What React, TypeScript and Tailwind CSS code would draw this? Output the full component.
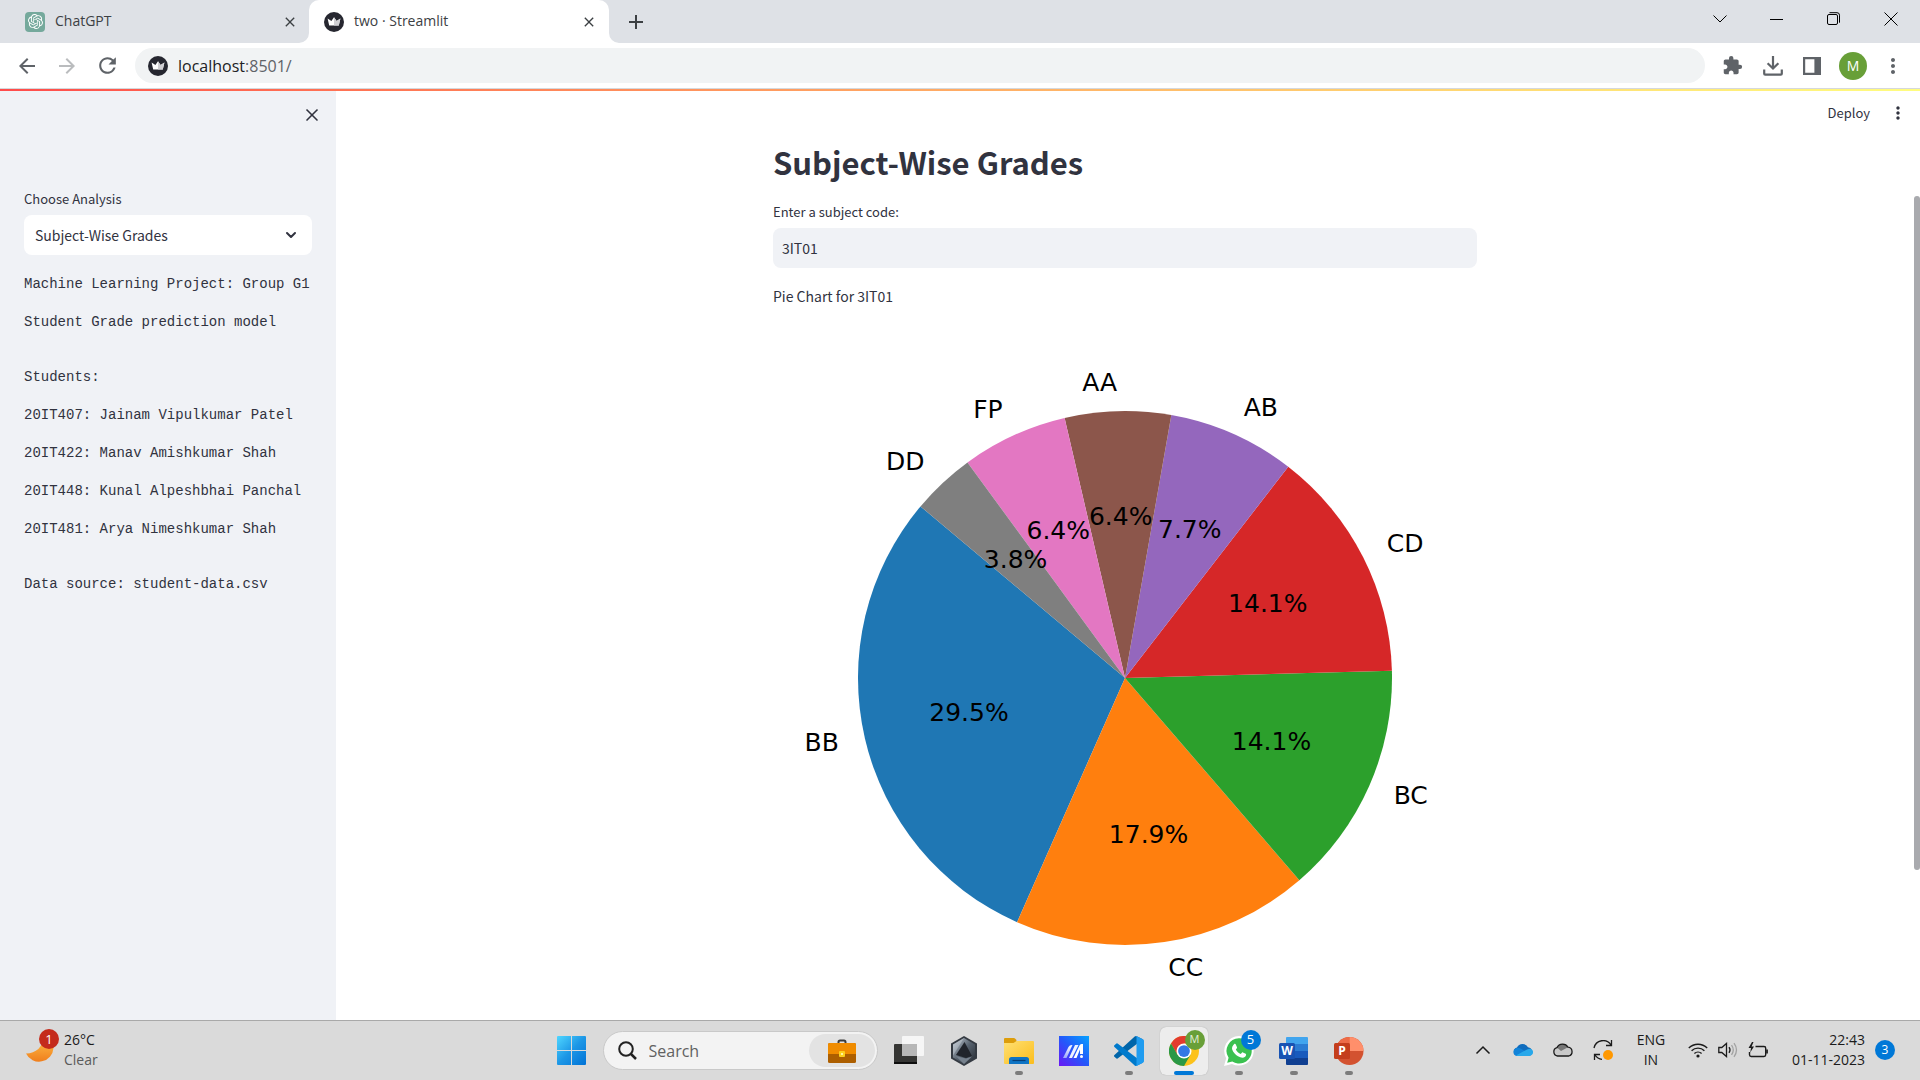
import React from 'react';
import { MdAdd, MdArrowBack, MdArrowForward, MdClose, MdExtension, MdMoreVert, MdRefresh } from 'react-icons/md';
import { SiOpenai } from 'react-icons/si';
import { ChevronDown, X } from 'lucide-react';

const UI = 'font-["Open_Sans","Noto_Sans",sans-serif]';
const SANS = 'font-["Noto_Sans_CJK_SC",sans-serif]';
const MONO = 'font-["Liberation_Mono",monospace]';

/* ---------- Browser chrome ---------- */

function CrownIcon() {
  return (
    <svg viewBox="0 0 20 20" className="size-5 shrink-0" aria-hidden="true">
      <circle cx="10" cy="10" r="10" fill="#262730" />
      <path d="M3.6 6.6 7.4 9 10 5.2 12.6 9l3.8-2.4-1.6 7H5.2z" fill="#fff" />
      <path d="M10 5.2 12.6 9l3.8-2.4-1.6 7H10z" fill="#d0d0d4" />
    </svg>
  );
}

function TabStrip() {
  return (
    <div className="flex h-[43px] bg-[#dee1e6] text-[#3c4043]">
      <div className="flex w-[309px] items-center pl-[25px] pr-[11px]">
        <span className="flex size-5 items-center justify-center rounded bg-[#75a99c] text-white">
          <SiOpenai size={15} />
        </span>
        <a href="#chatgpt" className="ml-[10px] flex-1 pb-0.5 text-[14px] leading-5">ChatGPT</a>
        <button aria-label="Close ChatGPT tab" className="flex size-4 items-center justify-center">
          <MdClose size={16} />
        </button>
      </div>
      <div className="relative flex w-[300px] items-center rounded-t-[10px] bg-white pl-[15px] pr-3">
        <svg viewBox="0 0 10 10" className="absolute -left-[10px] bottom-0 size-[10px]" aria-hidden="true">
          <path d="M10 0v10H0A10 10 0 0 0 10 0z" fill="#fff" />
        </svg>
        <svg viewBox="0 0 10 10" className="absolute -right-[10px] bottom-0 size-[10px]" aria-hidden="true">
          <path d="M0 0v10h10A10 10 0 0 1 0 0z" fill="#fff" />
        </svg>
        <CrownIcon />
        <a href="#streamlit" className="ml-[10px] flex-1 pb-0.5 text-[14px] leading-5">two · Streamlit</a>
        <button aria-label="Close Streamlit tab" className="flex size-4 items-center justify-center">
          <MdClose size={16} />
        </button>
      </div>
      <button aria-label="New tab" className="ml-4 flex w-[22px] items-center justify-center">
        <MdAdd size={24} className="shrink-0" />
      </button>
      <div className="ml-auto flex h-[37px] text-black">
        <button aria-label="Search tabs" className="flex w-[57px] items-center justify-center">
          <svg viewBox="0 0 14 14" className="size-[14px]" fill="none" stroke="#000" aria-hidden="true"><path d="M.5 3.500 7 10l6.500-6.500" /></svg>
        </button>
        <button aria-label="Minimize" className="flex w-[57px] items-center justify-center">
          <svg viewBox="0 0 14 14" className="size-[14px]" aria-hidden="true"><path d="M0 7.500h13" stroke="#000" /></svg>
        </button>
        <button aria-label="Restore" className="flex w-[57px] items-center justify-center">
          <svg viewBox="0 0 14 14" className="size-[14px]" fill="none" stroke="#000" aria-hidden="true">
            <rect x=".5" y="2.500" width="10" height="10" rx="1.500" />
            <path d="M2.500.7H10a2.500 2.500 0 0 1 2.500 2.500v7.500" />
          </svg>
        </button>
        <button aria-label="Close window" className="flex w-[58px] items-center justify-center">
          <svg viewBox="0 0 14 14" className="size-[14px]" stroke="#000" aria-hidden="true"><path d="M.5.5l13 13M13.500.5l-13 13" /></svg>
        </button>
      </div>
    </div>
  );
}

function Toolbar() {
  return (
    <div className="flex h-[46px] items-center border-b border-[#d5d8dc] bg-white px-[15px] text-[#5f6368]">
      <button aria-label="Back"><MdArrowBack size={24} /></button>
      <button aria-label="Forward" className="ml-4 text-[#babcbe]"><MdArrowForward size={24} /></button>
      <button aria-label="Reload" className="ml-4"><MdRefresh size={25} /></button>
      <div className="ml-[15px] flex h-[35px] flex-1 items-center rounded-full bg-[#f1f3f4] pl-[13px]">
        <CrownIcon />
        <a href="#url" className="ml-[10px] text-[16px] leading-6 text-[#202124]">
          localhost<span className="text-[#5f6368]">:8501/</span>
        </a>
      </div>
      <button aria-label="Extensions" className="ml-[17px]"><MdExtension size={21} /></button>
      <button aria-label="Downloads" className="ml-5">
        <svg viewBox="0 0 20 20" className="size-5" fill="none" stroke="currentColor" strokeWidth="2.200" aria-hidden="true">
          <path d="M10 0v12M4.600 7.200 10 12.500l5.400-5.300M1.200 13.500v4.200a1 1 0 0 0 1 1h15.600a1 1 0 0 0 1-1v-4.200" />
        </svg>
      </button>
      <button aria-label="Side panel" className="ml-5">
        <svg viewBox="0 0 18 18" className="size-[18px]" aria-hidden="true">
          <path d="M0 0h18v18H0zM2.200 2.200v13.600h9.200V2.200z" fill="currentColor" fillRule="evenodd" />
        </svg>
      </button>
      <button aria-label="Profile M" className="ml-[18px] flex size-7 items-center justify-center rounded-full bg-[#689f38] text-[14px] text-white">
        M
      </button>
      <button aria-label="Chrome menu" className="ml-[14px]"><MdMoreVert size={24} /></button>
    </div>
  );
}

/* ---------- Streamlit page ---------- */

function Sidebar() {
  return (
    <aside className="w-[336px] shrink-0 bg-[#f0f2f6] px-6 pt-[14px] text-[#31333f]">
      <div className="-mr-[10px] flex justify-end">
        <button aria-label="Close sidebar"><X size={20} strokeWidth={2} /></button>
      </div>
      <label htmlFor="analysis" className={`mt-[64px] block text-[13px] leading-5 ${SANS}`}>Choose Analysis</label>
      <div className="relative mt-[6px]">
        <select id="analysis" className={`h-10 w-full appearance-none rounded-lg bg-white pl-[11px] text-[14px] ${SANS}`}>
          <option>Subject-Wise Grades</option>
        </select>
        <ChevronDown size={16} strokeWidth={3} className="pointer-events-none absolute right-[13px] top-3" />
      </div>
      <div className={`mt-[18px] flex flex-col gap-[33px] whitespace-nowrap text-[14px] leading-[22px] ${MONO}`}>
        <div className="flex flex-col gap-4">
          <p>Machine Learning Project: Group G1</p>
          <p>Student Grade prediction model</p>
        </div>
        <div className="flex flex-col gap-4">
          <p>Students:</p>
          <p>20IT407: Jainam Vipulkumar Patel</p>
          <p>20IT422: Manav Amishkumar Shah</p>
          <p>20IT448: Kunal Alpeshbhai Panchal</p>
          <p>20IT481: Arya Nimeshkumar Shah</p>
        </div>
        <p>Data source: student-data.csv</p>
      </div>
    </aside>
  );
}

const GRADES = [
  { label: 'BB', count: 23, color: '#1f77b4' },
  { label: 'CC', count: 14, color: '#ff7f0e' },
  { label: 'BC', count: 11, color: '#2ca02c' },
  { label: 'CD', count: 11, color: '#d62728' },
  { label: 'AB', count: 6, color: '#9467bd' },
  { label: 'AA', count: 5, color: '#8c564b' },
  { label: 'FP', count: 5, color: '#e377c2' },
  { label: 'DD', count: 3, color: '#7f7f7f' },
];

function PieChart() {
  const cx = 352;
  const cy = 361;
  const r = 267;
  const total = GRADES.reduce((s, g) => s + g.count, 0);
  const at = (deg: number, dist: number) => {
    const a = (deg * Math.PI) / 180;
    return [cx + dist * Math.cos(a), cy - dist * Math.sin(a)];
  };
  let start = 140;
  const slices = GRADES.map((g) => {
    const sweep = (g.count / total) * 360;
    const slice = { ...g, start, end: start + sweep, mid: start + sweep / 2 };
    start += sweep;
    return slice;
  });
  return (
    <svg viewBox="0 0 704 680" className='w-full font-["DejaVu_Sans",sans-serif] text-[25px]' role="img" aria-label="Pie chart of grades">
      {slices.map((s) => {
        const [x1, y1] = at(s.start, r);
        const [x2, y2] = at(s.end, r);
        return <path key={s.label} d={`M${cx} ${cy}L${x1} ${y1}A${r} ${r} 0 0 0 ${x2} ${y2}Z`} fill={s.color} />;
      })}
      {slices.map((s) => {
        const [lx, ly] = at(s.mid, r * 1.1);
        const [px, py] = at(s.mid, r * 0.6);
        return (
          <g key={s.label}>
            <text x={lx} y={ly + 7} textAnchor={lx > cx ? 'start' : 'end'}>{s.label}</text>
            <text x={px} y={py + 7} textAnchor="middle">{((s.count / total) * 100).toFixed(1)}%</text>
          </g>
        );
      })}
    </svg>
  );
}

function Main() {
  return (
    <main className={`relative flex min-w-0 flex-1 overflow-hidden bg-white text-[#31333f] ${SANS}`}>
      <div className="min-w-0 flex-1">
        <div className="mx-auto w-full max-w-[704px] pt-[49px]">
          <h1 className="text-[31px] font-bold leading-[44px]">Subject-Wise Grades</h1>
          <label htmlFor="code" className="mt-[18px] block text-[13px] leading-5">Enter a subject code:</label>
          <input id="code" defaultValue="3IT01" className="mt-[6px] block h-10 w-full rounded-lg bg-[#f0f2f6] px-[9px] text-[14px]" />
          <p className="mt-4 text-[14px] leading-6">Pie Chart for 3IT01</p>
          <div className="mt-[9px]"><PieChart /></div>
        </div>
      </div>
      <div className="w-[6px] shrink-0 pt-[105px]">
        <div className="h-[674px] rounded-full bg-[#a9aaae]" />
      </div>
      <div className="absolute right-3 top-3 flex items-center gap-[18px]">
        <button className="text-[13px] leading-5">Deploy</button>
        <button aria-label="Main menu"><MdMoreVert size={20} /></button>
      </div>
    </main>
  );
}

/* ---------- Taskbar ---------- */

function TaskButton({ label, state, children }: { label: string; state?: 'open' | 'active'; children: React.ReactNode }) {
  return (
    <button
      aria-label={label}
      className={`relative flex size-12 items-center justify-center rounded-md ${state === 'active' ? 'bg-[#ededed] shadow-[0_0_1px_#999]' : ''}`}
    >
      {children}
      {state === 'open' && <span className="absolute bottom-0 left-5 h-1 w-2 rounded-full bg-[#7c7c7c]" />}
      {state === 'active' && <span className="absolute bottom-0 left-[14px] h-1 w-5 rounded-full bg-[#0078d7]" />}
    </button>
  );
}

function WindowsLogo() {
  return (
    <svg viewBox="0 0 29 29" className="size-[29px]" aria-hidden="true">
      <defs>
        <linearGradient id="win" x1="0" y1="0" x2="1" y2="1">
          <stop offset="0" stopColor="#4fd6ff" />
          <stop offset=".5" stopColor="#1d97e6" />
          <stop offset="1" stopColor="#0072d6" />
        </linearGradient>
      </defs>
      <path d="M1 0h13v14H0V1a1 1 0 0 1 1-1zM15 0h13a1 1 0 0 1 1 1v13H15zM0 15h14v14H1a1 1 0 0 1-1-1zM15 15h14v13a1 1 0 0 1-1 1H15z" fill="url(#win)" />
    </svg>
  );
}

function Briefcase() {
  return (
    <svg viewBox="0 0 28 24" className="h-6 w-7" aria-hidden="true">
      <path d="M10.500 5V3q0-1.500 1.500-1.500h4q1.500 0 1.500 1.500v2" fill="none" stroke="#3b3b3b" strokeWidth="2" />
      <rect y="4" width="28" height="20" rx="1.500" fill="#ad5f00" />
      <path d="M0 15V5.500Q0 4 1.500 4h25Q28 4 28 5.500V15z" fill="#f08c00" />
      <rect x="11" y="12" width="6" height="6" rx="1" fill="#fbd01e" />
      <rect x="13" y="14" width="2" height="2" fill="#fff3a0" />
    </svg>
  );
}

function TaskView() {
  return (
    <svg viewBox="0 0 30 29" className="h-[29px] w-[30px]" aria-hidden="true">
      <rect y="8" width="23" height="20" rx="1" fill="#353533" />
      <rect y="26" width="23" height="2" fill="#0e0e0e" />
      <rect x="8" width="22" height="20" rx="1" fill="#f6f6f6" />
      <path d="M8 8h15v12H8z" fill="#b7b7b7" />
    </svg>
  );
}

function ArmouryIcon() {
  return (
    <svg viewBox="0 0 28 30" className="h-[30px] w-7" aria-hidden="true">
      <defs>
        <linearGradient id="arm" x1="0" y1="0" x2="1" y2="1">
          <stop offset="0" stopColor="#c3ccd6" />
          <stop offset=".5" stopColor="#56616d" />
          <stop offset="1" stopColor="#252a31" />
        </linearGradient>
      </defs>
      <path d="M14 0 27 7.500v15L14 30 1 22.500v-15z" fill="#343a42" />
      <path d="M14 2 25 8.500v13L14 28 3 21.500v-13z" fill="url(#arm)" />
      <path d="M14.500 6 22 20l-6 2-10-3z" fill="#20242b" />
      <path d="M14 2 3 8.500v11z" fill="#d3dae2" fillOpacity=".4" />
      <path d="M5.500 20 16 22.500l6-2L14 28z" fill="#76818d" />
    </svg>
  );
}

function FolderIcon() {
  return (
    <svg viewBox="0 0 30 28" className="h-7 w-[30px]" aria-hidden="true">
      <defs>
        <linearGradient id="fold" x1="0" y1="0" x2="1" y2="1">
          <stop offset="0" stopColor="#ffe073" />
          <stop offset="1" stopColor="#fbbd1c" />
        </linearGradient>
      </defs>
      <path d="M0 10V2q0-1 1-1h9q1 0 2 1.500L13 5v5z" fill="#dd9d0b" />
      <path d="M0 6h9.500l3-2H29q1 0 1 1v21q0 1-1 1H1q-1 0-1-1z" fill="url(#fold)" />
      <path d="M5 27v-4.500Q5 20 7.500 20h15q2.500 0 2.500 2.500V27z" fill="#0f74c4" />
      <path d="M8.500 23.500h13" stroke="#063f78" strokeWidth="1.200" />
    </svg>
  );
}

function MyAsusIcon() {
  return (
    <svg viewBox="0 0 30 30" className="size-[30px]" aria-hidden="true">
      <defs>
        <linearGradient id="asus" x1="0" y1="1" x2="1" y2="0">
          <stop offset="0" stopColor="#6a16f5" />
          <stop offset=".5" stopColor="#2458fa" />
          <stop offset="1" stopColor="#05a3ff" />
        </linearGradient>
        <linearGradient id="bar" x1="0" y1="0" x2="0" y2="1">
          <stop offset="0" stopColor="#fff" />
          <stop offset="1" stopColor="#9aa8fb" />
        </linearGradient>
      </defs>
      <path d="M0 0h30v30H0z" fill="url(#asus)" />
      <path d="M4 22 9.500 11q1-2 3.500-2h.5L7.500 22z" fill="url(#bar)" />
      <path d="M10 22 16 9h3.500L13 22z" fill="#eef2ff" />
      <path d="M14.500 22 20.500 9.500Q21 8 22.500 8H24v10h-3v-4.500L17.500 22z" fill="#fff" />
      <circle cx="22.500" cy="20.500" r="1.500" fill="#fff" />
    </svg>
  );
}

function VSCodeIcon() {
  return (
    <svg viewBox="0 0 100 100" className="size-[30px]" aria-hidden="true">
      <path d="M96 11 76 1a6 6 0 0 0-7 1L1.500 63.500a4 4 0 0 0 0 6l5.500 5a4 4 0 0 0 5 .2L93.500 13.500A4 4 0 0 1 100 17z" fill="#0065a9" />
      <path d="M96 89 76 99a6 6 0 0 1-7-1L1.500 36.500a4 4 0 0 1 0-6l5.500-5a4 4 0 0 1 5-.2L93.500 86.500A4 4 0 0 0 100 83z" fill="#007acc" />
      <path d="M76 99a6 6 0 0 1-7-1c2 2 6 .6 6-2.500V4.500C75 1.400 71.300-.2 69 2a6 6 0 0 1 7-1l20.500 10A6 6 0 0 1 100 16.500v67a6 6 0 0 1-3.500 5.500z" fill="#1f9cf0" />
    </svg>
  );
}

function ChromeIcon() {
  return (
    <svg viewBox="0 0 48 48" className="size-[30px]" aria-hidden="true">
      <circle cx="24" cy="24" r="24" fill="#fcc21b" />
      <path d="M3.200 12 13.600 30 24 12H44.800A24 24 0 0 0 3.200 12z" fill="#e33b2e" />
      <path d="M3.200 12A24 24 0 0 0 24 48L34.400 30 24 24 13.600 30z" fill="#2a9846" />
      <circle cx="24" cy="24" r="12" fill="#fff" />
      <circle cx="24" cy="24" r="9.400" fill="#3478e5" />
    </svg>
  );
}

function WhatsAppIcon() {
  return (
    <svg viewBox="0 0 30 30" className="size-[30px]" aria-hidden="true">
      <path d="M15 0a14.800 14.800 0 1 1-7 27.900L0 30l2.200-7.800A14.800 14.800 0 0 1 15 0z" fill="#fff" />
      <path d="M15 2.300A12.600 12.600 0 1 1 8.300 25.500L3.200 26.800l1.400-5A12.600 12.600 0 0 1 15 2.300z" fill="#3bc150" />
      <path d="M10 8.200c.6-.6 1.500-.6 1.800.2l1.200 2.800c.2.500 0 .9-1.200 2.200 1.200 2.300 2.700 3.700 5 4.600 1.200-1.500 1.500-1.900 2.100-1.600l2.800 1.300c.8.400.4 2.200-.6 3.100-1.800 1.500-4.500 1-7.100-.5-2.600-1.400-5-4.200-5.800-6.700-.6-2 .3-4 1.800-5.400z" fill="#fff" />
    </svg>
  );
}

function WordIcon() {
  return (
    <svg viewBox="0 0 30 28" className="h-7 w-[30px]" aria-hidden="true">
      <path d="M8 0h20q1 0 1 1v6H7V1q0-1 1-1z" fill="#41a5ee" />
      <path d="M7 7h22v7H7z" fill="#2b7cd3" />
      <path d="M7 14h22v7H7z" fill="#185abd" />
      <path d="M7 21h22v6q0 1-1 1H8q-1 0-1-1z" fill="#103f91" />
      <rect y="6" width="16" height="16" rx="1.500" fill="#1853b3" />
      <text x="8" y="18" textAnchor="middle" fill="#fff" className="text-[12px] font-bold">W</text>
    </svg>
  );
}

function PowerPointIcon() {
  return (
    <svg viewBox="0 0 30 28" className="h-7 w-[30px]" aria-hidden="true">
      <circle cx="15.500" cy="14" r="14" fill="#d35230" />
      <path d="M15.500 0A14 14 0 0 0 1.500 14h14z" fill="#ed6c47" />
      <path d="M15.500 0a14 14 0 0 1 14 14h-14z" fill="#ff8f6b" />
      <rect y="6" width="16" height="16" rx="1.500" fill="#c43e1c" />
      <text x="8" y="18" textAnchor="middle" fill="#fff" className="text-[12px] font-bold">P</text>
    </svg>
  );
}

const CLOUD = 'M4.500 13A4.300 4.300 0 0 1 4 4.600 6.200 6.200 0 0 1 15 4.200a4.500 4.500 0 0 1 .8 8.800z';

function Taskbar() {
  return (
    <footer className="grid h-[60px] shrink-0 grid-cols-[1fr_auto_1fr] items-center border-t border-[#a9a9a9] bg-[#dadada] text-[#1b1b1b]">
      <button className="flex h-12 items-center pb-0.5 pl-[26px] text-left text-[14px] leading-5">
        <span className="relative block w-[38px]">
          <svg viewBox="0 0 28 28" className="size-7" aria-hidden="true">
            <defs>
              <linearGradient id="moon" x1="0" y1="0" x2="0" y2="1">
                <stop offset="0" stopColor="#ffc34a" />
                <stop offset="1" stopColor="#f07f1d" />
              </linearGradient>
            </defs>
            <path d="M18 0c-1 11-8 17.500-18 17.500A14.500 14.500 0 0 0 27.500 12C27 6 23 1 18 0z" fill="url(#moon)" />
          </svg>
          <span className="absolute -top-[7px] left-[13px] flex size-5 items-center justify-center rounded-full bg-[#c42b1c] text-[13px] text-white">1</span>
        </span>
        <span>26°C<br /><span className="text-[#5b5b5b]">Clear</span></span>
      </button>
      <nav aria-label="Taskbar apps" className="flex items-center gap-[7px]">
        <TaskButton label="Start"><WindowsLogo /></TaskButton>
        <div className="flex h-[39px] w-[275px] items-center rounded-full border border-[#c9c9c9] bg-[#f3f3f3] pl-[14px] pr-[2px]">
          <svg viewBox="0 0 19 19" className="size-[19px]" fill="none" stroke="#222" strokeWidth="2" aria-hidden="true">
            <circle cx="8" cy="8" r="6.800" />
            <path d="m13 13 5 5" strokeWidth="2.500" />
          </svg>
          <input aria-label="Search" placeholder="Search" className="ml-3 w-0 flex-1 bg-transparent text-[16px] placeholder:text-[#616161]" />
          <button aria-label="Search highlights" className="flex h-[33px] w-[66px] items-center justify-center rounded-full bg-[#e3e3e3]">
            <Briefcase />
          </button>
        </div>
        <TaskButton label="Task view"><TaskView /></TaskButton>
        <TaskButton label="Armoury Crate"><ArmouryIcon /></TaskButton>
        <TaskButton label="File Explorer" state="open"><FolderIcon /></TaskButton>
        <TaskButton label="MyASUS"><MyAsusIcon /></TaskButton>
        <TaskButton label="Visual Studio Code" state="open"><VSCodeIcon /></TaskButton>
        <TaskButton label="Google Chrome" state="active">
          <ChromeIcon />
          <span className="absolute right-[3px] top-[3px] flex size-5 items-center justify-center rounded-full bg-[#689f38] text-[11px] text-[#e4eeda]">M</span>
        </TaskButton>
        <TaskButton label="WhatsApp" state="open">
          <WhatsAppIcon />
          <span className="absolute right-0.5 top-[3px] flex size-5 items-center justify-center rounded-full bg-[#0078d7] text-[13px] text-white">5</span>
        </TaskButton>
        <TaskButton label="Word" state="open"><WordIcon /></TaskButton>
        <TaskButton label="PowerPoint" state="open"><PowerPointIcon /></TaskButton>
      </nav>
      <div className="flex items-center justify-end pb-0.5 pr-[25px] text-[14px] leading-5">
        <button aria-label="Show hidden icons">
          <svg viewBox="0 0 20 20" className="size-5" fill="none" stroke="#1b1b1b" strokeWidth="1.500" aria-hidden="true"><path d="m3.500 13.500 6.500-6.500 6.500 6.500" /></svg>
        </button>
        <svg viewBox="0 0 20 14" className="ml-5 h-[14px] w-5" role="img" aria-label="OneDrive">
          <path d={CLOUD} fill="#0f6cbd" />
          <path d="M1 6.500Q4 3.500 7.500 5.500l6 3.500L4 13Q-1 12 1 6.500z" fill="#1283d8" />
          <path d="M3 12.500 12 7.500q6-3.500 7.700 0 1.500 4-2.700 5.500H4.500z" fill="#28a8ea" />
        </svg>
        <svg viewBox="0 0 20 14" className="ml-5 h-[14px] w-5 overflow-visible" role="img" aria-label="Cloud storage">
          <path d={CLOUD} fill="#c9c9c9" />
          <path d="M4 4.600A6.200 6.200 0 0 1 15 4.200L8 8z" fill="#777" />
          <path d={CLOUD} fill="none" stroke="#1b1b1b" strokeWidth="1.300" />
        </svg>
        <svg viewBox="0 0 20 20" className="ml-5 size-5" fill="none" stroke="#1b1b1b" strokeWidth="1.300" role="img" aria-label="Update pending">
          <path d="M1 8a9.300 9.300 0 0 1 17-3M18.500 0v5.500H13M1.500 20v-5.500H7M2 15a9.300 9.300 0 0 0 7 4.300" />
          <circle cx="15" cy="15" r="5" fill="#ff9800" stroke="none" />
        </svg>
        <button className="ml-5 w-9 text-center">ENG<br />IN</button>
        <svg viewBox="0 0 20 16" className="ml-[19px] h-4 w-5" fill="none" stroke="#1b1b1b" strokeWidth="1.400" role="img" aria-label="Wi-Fi">
          <path d="M.8 6a13 13 0 0 1 18.400 0M3.600 8.800a9 9 0 0 1 12.800 0M6.400 11.600a5.200 5.200 0 0 1 7.200 0" />
          <circle cx="10" cy="14" r="1.600" fill="#1b1b1b" stroke="none" />
        </svg>
        <svg viewBox="0 0 20 16" className="ml-[10px] h-4 w-5" fill="none" strokeWidth="1.300" role="img" aria-label="Volume">
          <path d="M.8 5.500h3L8.500 1.500v13L3.800 10.500h-3zM11 5.200q2 2.800 0 5.600" stroke="#1b1b1b" />
          <path d="M13.500 3.200q3.600 4.800 0 9.600M16 1.200q5 6.800 0 13.600" stroke="#a2a2a2" />
        </svg>
        <svg viewBox="0 0 20 16" className="ml-[10px] h-4 w-5" fill="none" stroke="#1b1b1b" strokeWidth="1.400" role="img" aria-label="Battery charging">
          <path d="M7.500 4.500H16a1.700 1.700 0 0 1 1.700 1.700v6.600a1.700 1.700 0 0 1-1.700 1.700H3.200a1.700 1.700 0 0 1-1.700-1.700V10M19.200 7.500v4" />
          <path d="M4 0 .5 6H3l-.8 4.500L6 4.500H3.600L5.500 0z" fill="#1b1b1b" stroke="none" />
        </svg>
        <button className="ml-6 text-right">22:43<br />01-11-2023</button>
        <span className="ml-[10px] flex size-5 items-center justify-center rounded-full bg-[#0078d7] text-[12px] text-white">3</span>
      </div>
    </footer>
  );
}

export default function App() {
  return (
    <div className={`flex h-screen flex-col overflow-hidden ${UI}`}>
      <TabStrip />
      <Toolbar />
      <div className="h-[2px] shrink-0 bg-linear-to-r from-[#ff4b4b] to-[#fffd80]" />
      <div className="flex min-h-0 flex-1">
        <Sidebar />
        <Main />
      </div>
      <Taskbar />
    </div>
  );
}
